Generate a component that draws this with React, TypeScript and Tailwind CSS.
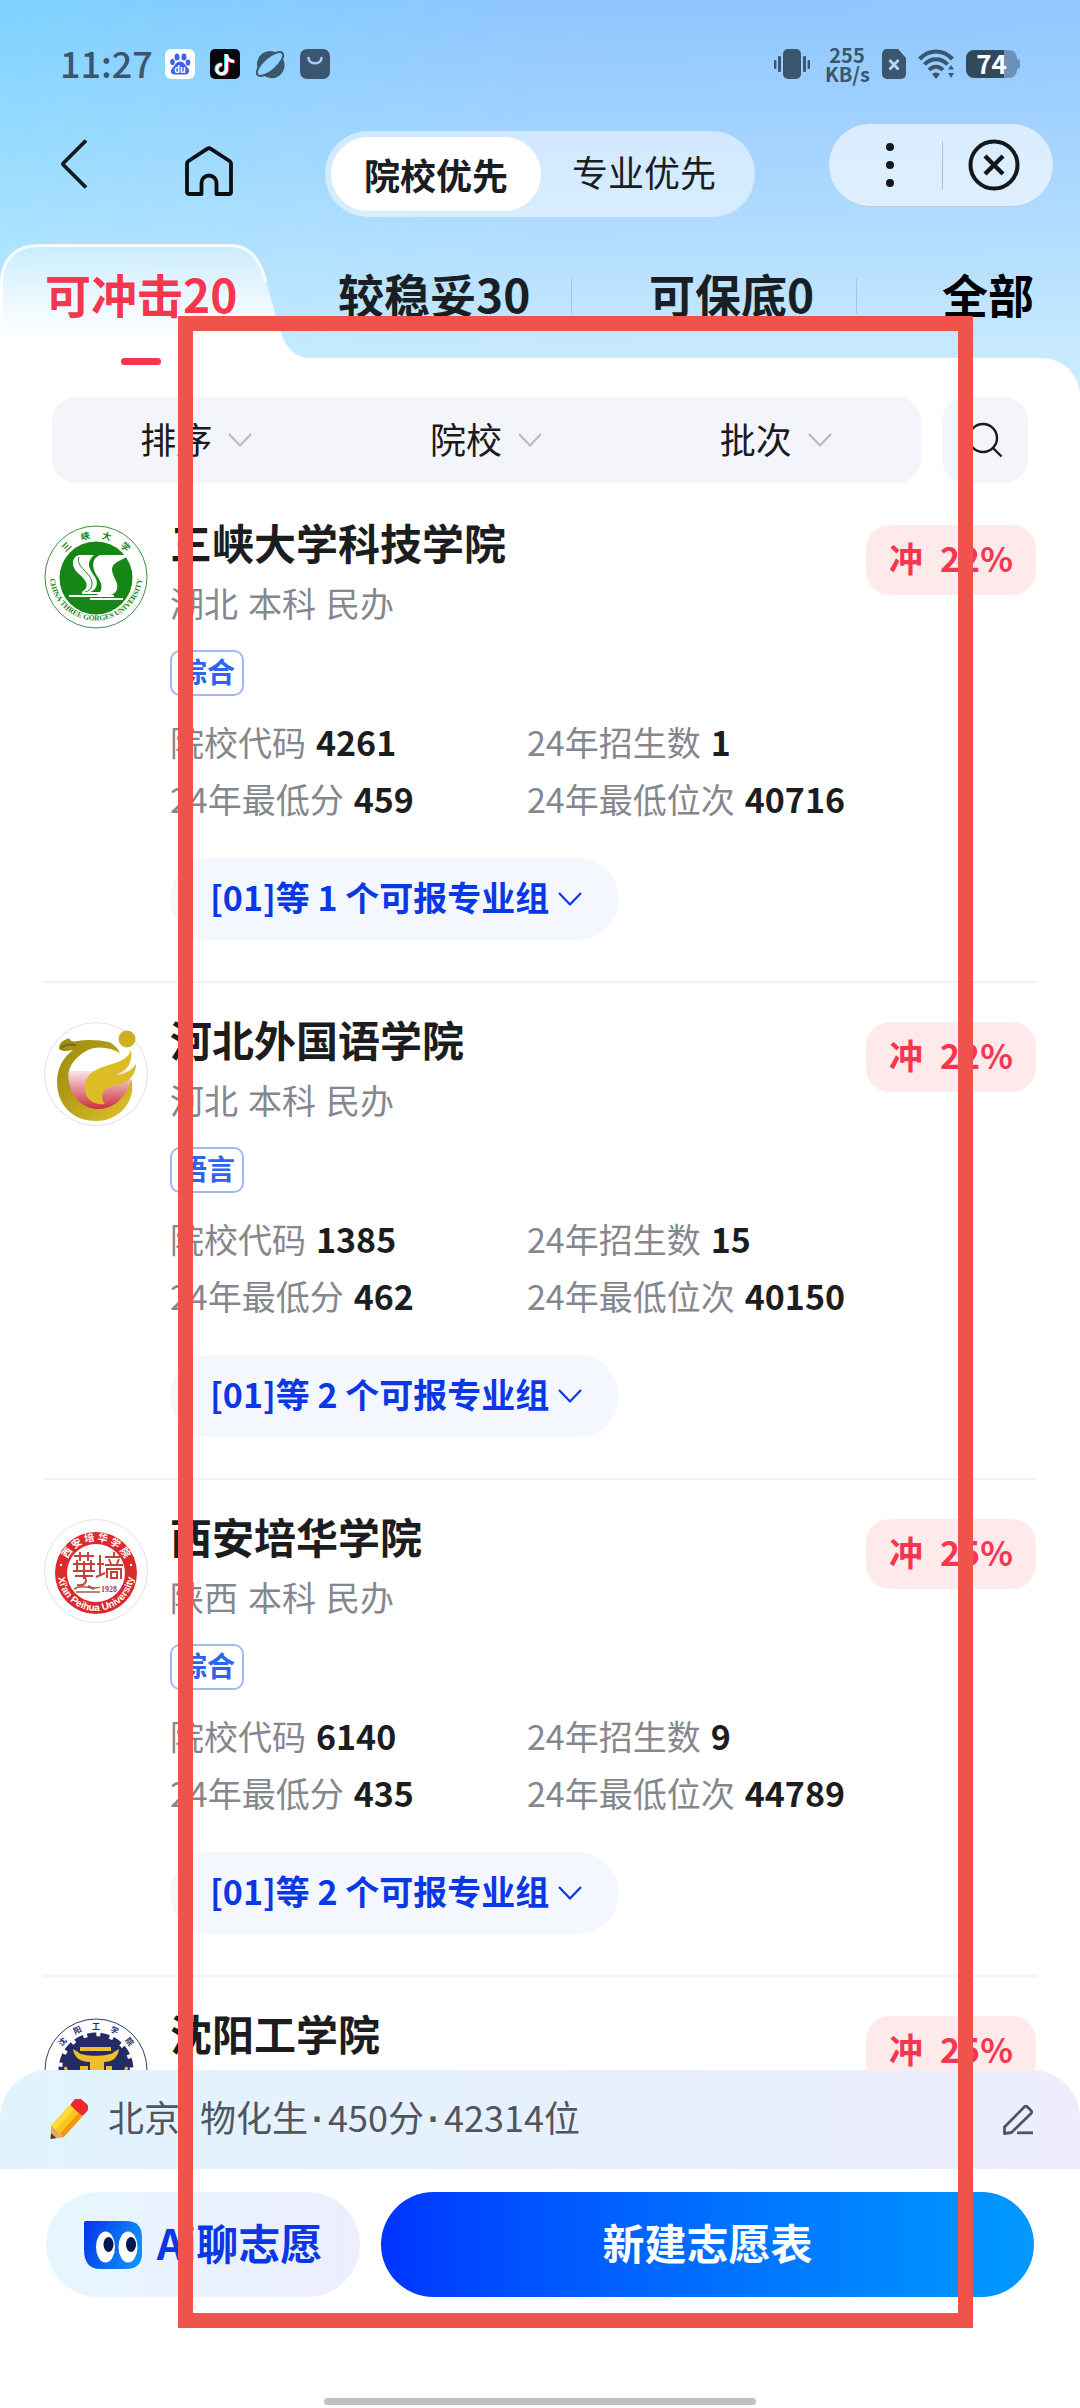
import type { ReactNode } from "react";

type School = {
  name: string;
  traits: string[];
  tag: string;
  rate: string;
  code: string;
  count: string;
  score: string;
  rank: string;
  groups: number;
  logo: ReactNode;
};

function ThreeGorgesLogo() {
  return (
    <svg viewBox="0 0 104 104" className="size-full">
      <defs>
        <path id="tg-bottom" d="M5.500 49 a46.500 46.500 0 0 0 93 0" />
        <path id="tg-top" d="M13 52 a39 39 0 0 1 78 0" />
      </defs>
      <circle cx="52" cy="52" r="51" fill="#fff" stroke="#3f8f45" strokeWidth="1" />
      <circle cx="52" cy="53" r="36.500" fill="#168616" />
      <path
        d="M35 30 H50 C41 38 46 45 51 52 C56 60 50 68 44 67 H38 C46 62 43 56 35 49 C26 41 28 32 35 30Z"
        fill="#fff"
      />
      <path
        d="M56 30 H86 C78 36 69 36 68 44 C68 52 75 57 73 64 C71 71 63 71 53 70 C60 65 58 58 53 51 C47 42 48 33 56 30Z"
        fill="#fff"
      />
      <path d="M35 32 C31 42 48 48 48 58 C48 64 45 66 41 67" fill="none" stroke="#168616" strokeWidth="1" />
      <path d="M25 71 H70 M38 68 H56 M46 74 H79" stroke="#fff" strokeWidth="2" />
      <text fontSize="7.500" fontWeight="700" fill="#168616" className="font-['Liberation_Serif',serif]">
        <textPath href="#tg-bottom" startOffset="50%" textAnchor="middle">
          CHINA THREE GORGES UNIVERSITY
        </textPath>
      </text>
      <text fontSize="9" fontWeight="700" fill="#168616">
        <textPath href="#tg-top" startOffset="50%" textAnchor="middle">
          三　 峡　 大　 学
        </textPath>
      </text>
    </svg>
  );
}

function HebeiLogo() {
  return (
    <svg viewBox="0 0 104 104" className="size-full">
      <defs>
        <linearGradient id="hb-gold" x1="0" y1="0" x2="1" y2="1">
          <stop offset="0" stopColor="#9f8c12" />
          <stop offset="0.400" stopColor="#b09a18" />
          <stop offset="1" stopColor="#e3c52c" />
        </linearGradient>
        <linearGradient id="hb-red" x1="0" y1="0" x2="0" y2="1">
          <stop offset="0" stopColor="#fbe4e6" />
          <stop offset="1" stopColor="#c9202e" />
        </linearGradient>
      </defs>
      <circle cx="52" cy="52" r="51.500" fill="#fff" stroke="#dfe0ee" strokeWidth="1" />
      <path d="M22 49 H86 C88 74 74 90 56 90 C36 90 22 72 22 49Z" fill="url(#hb-red)" />
      <path
        d="M15 27 C15 19 21 18 25 16 C26 19 29 20 33 19 C44 17 56 18 65 20 C69 22 74 26 76 31 C66 25 52 23 42 29 C29 37 22 47 25 60 C28 78 42 88 56 87 C72 86 84 73 87 56 C93 76 78 99 52 99 C28 99 13 82 13 60 C13 45 20 35 29 28 C23 29 19 30 15 27Z"
        fill="url(#hb-gold)"
      />
      <path
        d="M87 27 C89 42 83 49 71 53 C79 53 86 50 92 42 C92 56 80 63 69 64 C59 66 55 74 61 82 C47 84 39 73 41 62 C44 47 60 45 74 40 C81 37 86 33 87 27Z"
        fill="#dcbd26"
      />
      <circle cx="83" cy="17" r="8.500" fill="#cdae20" />
      <path d="M17 26 C21 22 27 22 32 23" fill="none" stroke="#6d6a2a" strokeWidth="2" />
    </svg>
  );
}

function PeihuaLogo() {
  return (
    <svg viewBox="0 0 104 104" className="size-full">
      <defs>
        <path id="ph-bottom" d="M14 54 a38 38 0 0 0 76 0" />
        <path id="ph-top" d="M20 54 a32 32 0 0 1 64 0" />
      </defs>
      <circle cx="52" cy="52" r="51.500" fill="#fff" stroke="#e2e2e6" strokeWidth="1" />
      <circle cx="52" cy="54" r="41" fill="#d92a2c" />
      <circle cx="52" cy="54" r="29" fill="#fff" />
      <text fontSize="10" fontWeight="700" fill="#fff">
        <textPath href="#ph-top" startOffset="50%" textAnchor="middle">
          西 安 培 华 学 院
        </textPath>
      </text>
      <text fontSize="10" fontWeight="700" fill="#fff" className="font-['Liberation_Sans',sans-serif]">
        <textPath href="#ph-bottom" startOffset="50%" textAnchor="middle">
          Xi&apos;an Peihua University
        </textPath>
      </text>
      <circle cx="17" cy="46" r="1.200" fill="#fff" />
      <circle cx="87" cy="46" r="1.200" fill="#fff" />
      <g fill="none" stroke="#c4423c" strokeWidth="2">
        <path d="M30 37 H50 M36 33 V42 M44 33 V42 M29 45 H51 M33 41 V52 M40 42 V60 M47 41 V52 M29 52 H51 M31 57 H49 M33 66 C42 68 44 60 40 58 M44 67 L50 70" />
        <path d="M53 45 H60 M56 36 V57 M52 58 L61 54 M61 38 H79 M70 33 V38 M65 40 L67 45 M75 40 L73 45 M61 46 H79 M63 59 V50 H77 V60 M67 53 H73 V59 H67Z" />
      </g>
      <path d="M30 70 C40 64 50 72 56 68 M32 73 H56" fill="none" stroke="#a85a52" strokeWidth="1.500" />
      <text x="57" y="73" fontSize="8" fontWeight="700" fill="#b8352f" className="font-['Liberation_Serif',serif]">
        1928
      </text>
    </svg>
  );
}

function ShenyangLogo() {
  return (
    <svg viewBox="0 0 104 104" className="size-full">
      <defs>
        <path id="sy-top" d="M11 54 a41 41 0 0 1 82 0" />
      </defs>
      <circle cx="52" cy="54" r="51" fill="#fff" stroke="#323a6e" strokeWidth="1" />
      <circle cx="52" cy="54" r="35" fill="none" stroke="#242c68" strokeWidth="5" strokeDasharray="9 4" />
      <circle cx="52" cy="54" r="34" fill="#242c68" />
      <text fontSize="8" fontWeight="700" fill="#242c68">
        <textPath href="#sy-top" startOffset="50%" textAnchor="middle">
          沈　 阳　 工　 学　 院
        </textPath>
      </text>
      <g fill="#f0bd2b">
        <path d="M36 31 H67 V35 H36Z" />
        <path d="M29 33 L34 36 C37 41 66 41 70 36 L75 33 C74 42 68 46 60 46 V60 H46 V46 C37 46 30 42 29 33Z" />
        <path d="M36 50 H44 V54 H40 V60 H36Z M62 50 H68 V60 H64 V54 H62Z" />
      </g>
      <path d="M21 51 L25 60 M83 51 L79 60" stroke="#f0bd2b" strokeWidth="3" />
    </svg>
  );
}

const schools: School[] = [
  {
    name: "三峡大学科技学院",
    traits: ["湖北", "本科", "民办"],
    tag: "综合",
    rate: "22%",
    code: "4261",
    count: "1",
    score: "459",
    rank: "40716",
    groups: 1,
    logo: <ThreeGorgesLogo />,
  },
  {
    name: "河北外国语学院",
    traits: ["河北", "本科", "民办"],
    tag: "语言",
    rate: "22%",
    code: "1385",
    count: "15",
    score: "462",
    rank: "40150",
    groups: 2,
    logo: <HebeiLogo />,
  },
  {
    name: "西安培华学院",
    traits: ["陕西", "本科", "民办"],
    tag: "综合",
    rate: "25%",
    code: "6140",
    count: "9",
    score: "435",
    rank: "44789",
    groups: 2,
    logo: <PeihuaLogo />,
  },
  {
    name: "沈阳工学院",
    traits: ["辽宁", "本科", "民办"],
    tag: "理工",
    rate: "25%",
    code: "6205",
    count: "6",
    score: "441",
    rank: "43720",
    groups: 2,
    logo: <ShenyangLogo />,
  },
];

const filters = ["排序", "院校", "批次"];

const profile = ["北京", "物化生", "450分", "42314位"];

function ChevronDown({ className }: { className: string }) {
  return (
    <svg viewBox="0 0 26 16" fill="none" stroke="currentColor" className={className}>
      <path d="M2 2 L13 13.500 L24 2" strokeWidth="2.200" strokeLinejoin="round" />
    </svg>
  );
}

function StatusBar() {
  return (
    <div className="flex h-[123px] items-center justify-between pt-[4px] pr-[60px] pl-[60px] text-[#3b566f]">
      <div className="flex items-center gap-[15px]">
        <span className="w-[90px] pb-[3px] text-[36px] leading-[40px] font-medium">11:27</span>
        <svg viewBox="0 0 30 30" className="size-[30px]">
          <rect width="30" height="30" rx="6" fill="#fff" />
          <g fill="#3b63e8">
            <ellipse cx="12" cy="8" rx="2.500" ry="3.500" />
            <ellipse cx="19" cy="8" rx="2.500" ry="3.500" />
            <ellipse cx="7.500" cy="13" rx="2.300" ry="3.100" />
            <ellipse cx="23" cy="13.500" rx="2.300" ry="3.100" />
            <path d="M15 12.500 C19 12.500 20 16 22.500 18.500 C26 22 23 26 20 25.500 H10 C6 26 4.500 22 7.500 19 C10 16.500 11 12.500 15 12.500Z" />
          </g>
          <text x="15" y="24" textAnchor="middle" fontSize="9" fontWeight="700" fill="#fff">
            du
          </text>
        </svg>
        <svg viewBox="0 0 30 30" className="size-[30px]">
          <rect width="30" height="30" rx="5" fill="#06060e" />
          <g fill="none" strokeWidth="3">
            <path d="M15.500 5 V20 A4.800 4.800 0 1 1 11 15 M15.500 6 C16 10 19 12 23 12" stroke="#35e3dd" />
            <path d="M17.500 6 V21 A4.800 4.800 0 1 1 12.500 16 M17.500 7 C18 11 21 13 25 13" stroke="#f3305a" />
            <path d="M16.500 5 V20 A4.800 4.800 0 1 1 12 15.500 M16.500 6 C17 10 20 12 24 12.500" stroke="#fff" />
          </g>
        </svg>
        <svg viewBox="0 0 30 30" fill="none" className="size-[30px]">
          <path d="M3 20 A13 13 0 0 1 22 4 C12 7 7 12 3 20Z M8 26 A13 13 0 0 0 28 10 C23 19 17 23 8 26Z" fill="currentColor" />
          <ellipse cx="15" cy="15" rx="16.500" ry="6.500" transform="rotate(-41 15 15)" stroke="currentColor" strokeWidth="2" />
        </svg>
        <svg viewBox="0 0 30 30" className="size-[30px]">
          <rect width="30" height="30" rx="7" fill="currentColor" />
          <path d="M8.500 9 C9 16 21 16 21.500 9" fill="none" stroke="#a9cdf2" strokeWidth="2.600" strokeLinecap="round" />
        </svg>
      </div>
      <div className="flex items-center">
        <svg viewBox="0 0 36 30" className="mr-[15px] h-[30px] w-[36px]" fill="currentColor">
          <rect x="9" width="18" height="30" rx="5" />
          <rect x="4" y="7" width="3" height="16" rx="1" />
          <rect x="0" y="11" width="2.500" height="9" rx="1" />
          <rect x="29" y="7" width="3" height="16" rx="1" />
          <rect x="33.500" y="11" width="2.500" height="9" rx="1" />
        </svg>
        <div className="mr-[13px] w-[44px] text-center text-[20px] leading-[19px] font-bold">
          <div>255</div>
          <div>KB/s</div>
        </div>
        <svg viewBox="0 0 24 30" className="mr-[12px] h-[30px] w-[24px]">
          <path d="M5 0 H16 L24 9 V25 A5 5 0 0 1 19 30 H5 A5 5 0 0 1 0 25 V5 A5 5 0 0 1 5 0Z" fill="currentColor" />
          <path d="M7.500 11 L16.500 20.500 M16.500 11 L7.500 20.500" stroke="#b4d8fc" strokeWidth="2.800" />
        </svg>
        <svg viewBox="0 0 37 30" className="mr-[11px] h-[30px] w-[37px]" fill="none" stroke="currentColor">
          <path d="M1.500 10 C11 0 25 0 34.500 10" strokeWidth="4" />
          <path d="M6.500 15.500 C13 8.500 23 8.500 29.500 15.500" strokeWidth="4" />
          <path d="M11 21 C15 16.500 21 16.500 25 21" strokeWidth="4" />
          <path d="M14 25 Q18 22 22 25 L18 30Z M30 20.500 L33 16 L36 20.500Z M30 24 L33 29 L36 24Z" fill="currentColor" stroke="none" />
        </svg>
        <div className="flex items-center">
          <div className="flex h-[28px] w-[51px] items-center justify-center rounded-lg bg-linear-to-r from-[#34485c] from-75% to-[#6c92ba] to-75% pb-[2px] text-[26px] leading-[28px] font-bold text-white">
            74
          </div>
          <div className="h-[10px] w-[3px] rounded-r-sm bg-[#6c92ba]" />
        </div>
      </div>
    </div>
  );
}

function NavBar() {
  return (
    <div className="flex h-[121px] items-start pr-[26px] pl-[60px]">
      <button type="button" aria-label="返回" className="mt-[16px]">
        <svg viewBox="0 0 28 50" className="h-[50px] w-[28px]" fill="none" stroke="#14181c" strokeWidth="3.800">
          <path d="M26 1.500 L3.500 24 Q2.500 25 3.500 26 L26 48.500" />
        </svg>
      </button>
      <button type="button" aria-label="首页" className="mt-[23px] ml-[97px]">
        <svg viewBox="0 0 48 50" className="h-[50px] w-[48px]" fill="none" stroke="#0c0f12" strokeWidth="3.800" strokeLinejoin="round">
          <path d="M4 48 Q2 48 2 46 V17.500 Q2 16 3.500 15 L22.500 2.700 Q24 1.800 25.500 2.700 L44.500 15 Q46 16 46 17.500 V46 Q46 48 44 48 H31.500 V37 A7.500 7.500 0 0 0 16.500 37 V48Z" />
        </svg>
      </button>
      <div className="mt-[8px] ml-[92px] flex h-[86px] rounded-full bg-white/50 p-[6px] text-[36px] text-[#1a1d21]">
        <button type="button" className="rounded-full bg-white px-[33px] leading-[74px] font-bold">
          院校优先
        </button>
        <button type="button" className="pr-[33px] pb-[6px] pl-[31px] leading-[68px]">
          专业优先
        </button>
      </div>
      <div className="ml-auto flex h-[84px] w-[226px] items-center rounded-full border border-[#b4cfe6] bg-white/60 pr-[8px]">
        <button type="button" aria-label="更多" className="flex h-full flex-1 flex-col items-center justify-center gap-[10px] pl-[10px]">
          <span className="size-[8px] rounded-full bg-[#14181c]" />
          <span className="size-[8px] rounded-full bg-[#14181c]" />
          <span className="size-[8px] rounded-full bg-[#14181c]" />
        </button>
        <div className="h-[48px] w-px bg-[#adc3d8]" />
        <button type="button" aria-label="关闭" className="flex h-full flex-1 items-center justify-center">
          <svg viewBox="0 0 52 52" className="size-[52px]" fill="none" stroke="#14181c" strokeWidth="4">
            <circle cx="26" cy="26" r="23.500" />
            <path d="M17 17 L35 35 M35 17 L17 35" strokeWidth="4.400" />
          </svg>
        </button>
      </div>
    </div>
  );
}

function RiskTabs() {
  return (
    <div className="relative h-[114px]">
      <svg viewBox="0 0 310 114" className="absolute top-0 left-0 h-[114px] w-[310px]">
        <defs>
          <linearGradient id="tab-fill" x1="0" y1="0" x2="0" y2="1">
            <stop offset="0" stopColor="#fff" stopOpacity="0.350" />
            <stop offset="0.850" stopColor="#fff" />
          </linearGradient>
        </defs>
        <path
          d="M0 114 V38 C1 15 16 1.500 38 1.500 H232 C251 2 261 18 266 38 L279 82 C284 102 294 114 310 114Z"
          fill="url(#tab-fill)"
        />
        <path
          d="M1.500 80 V38 C2 15 16 1.500 38 1.500 H232 C251 2 261 18 266 38"
          fill="none"
          stroke="#fff"
          strokeOpacity="0.850"
          strokeWidth="3"
        />
      </svg>
      <div className="relative grid grid-cols-[293fr_233fr_78fr_207fr_86fr_92fr] justify-items-start pt-[22px] pr-[46px] pl-[45px] text-[46px] leading-[54px] font-bold whitespace-nowrap text-[#1a1f25]">
        <button type="button" className="relative text-[#f5364f]">
          可冲击20
          <span className="absolute top-[92px] left-1/2 h-[7px] w-[40px] -translate-x-1/2 rounded-full bg-[#f5364f]" />
        </button>
        <button type="button">较稳妥30</button>
        <div className="mt-[12px] h-[36px] w-px bg-[#a5c8e8]" />
        <button type="button">可保底0</button>
        <div className="mt-[12px] h-[36px] w-px bg-[#a5c8e8]" />
        <button type="button" className="text-black">
          全部
        </button>
      </div>
    </div>
  );
}

function FilterBar() {
  return (
    <div className="flex gap-[21px] pt-[39px] pr-[52px] pl-[52px]">
      <div className="flex h-[86px] flex-1 rounded-3xl bg-[#f4f5fa] text-[36px] text-[#191b20]">
        {filters.map((filter) => (
          <button key={filter} type="button" className="flex flex-1 items-center justify-center gap-[15px]">
            <span className="pb-[5px]">{filter}</span>
            <ChevronDown className="h-[16px] w-[26px] text-[#b9bbc2]" />
          </button>
        ))}
      </div>
      <button type="button" aria-label="搜索" className="flex size-[86px] items-center justify-center rounded-3xl bg-[#f4f5fa]">
        <svg viewBox="0 0 36 36" className="size-[36px]" fill="none" stroke="#191b20" strokeWidth="2.400">
          <circle cx="16" cy="16" r="14" />
          <path d="M26 26 L34.500 34.500" />
        </svg>
      </button>
    </div>
  );
}

function Stat({ label, value }: { label: string; value: string }) {
  return (
    <div className="flex gap-[10px]">
      <dt className="text-[#85878e]">{label}</dt>
      <dd className="font-bold text-[#1c1d20]">{value}</dd>
    </div>
  );
}

function SchoolCard({ school }: { school: School }) {
  return (
    <article className="mx-[44px] flex items-start gap-[22px] border-b-2 border-[#f2f2f4] pt-[35px] pb-[41px]">
      <div className="mt-[4px] size-[104px] shrink-0">{school.logo}</div>
      <div className="min-w-0 flex-1">
        <h2 className="text-[42px] leading-[42px] font-bold text-[#1c1d20]">{school.name}</h2>
        <p className="mt-[20px] flex gap-[10px] text-[34px] leading-[40px] text-[#85878e]">
          {school.traits.map((trait) => (
            <span key={trait}>{trait}</span>
          ))}
        </p>
        <span className="mt-[27px] block h-[46px] w-fit rounded-[10px] border-2 border-[#a3b8f0] px-[7px] text-[28px] leading-[38px] font-bold text-[#2c63f0]">
          {school.tag}
        </span>
        <dl className="mt-[17px] grid grid-cols-[357px_1fr] text-[34px] leading-[57px] whitespace-nowrap">
          <Stat label="院校代码" value={school.code} />
          <Stat label="24年招生数" value={school.count} />
          <Stat label="24年最低分" value={school.score} />
          <Stat label="24年最低位次" value={school.rank} />
        </dl>
        <button
          type="button"
          className="mt-[31px] flex h-[82px] items-center gap-[8px] rounded-full bg-[#f4f7fe] pr-[36px] pl-[40px] text-[34px] font-bold text-[#0a38e6]"
        >
          <span className="pb-[5px]">
            [01]等 {school.groups} 个可报专业组
          </span>
          <ChevronDown className="h-[16px] w-[26px]" />
        </button>
      </div>
      <div className="mt-[4px] flex h-[70px] w-[170px] shrink-0 items-center justify-center gap-[17px] rounded-3xl bg-[#ffeaeb] pb-[5px] text-[34px] font-bold text-[#f5364f]">
        <span>冲</span>
        <span>{school.rate}</span>
      </div>
    </article>
  );
}

function BottomPanel() {
  return (
    <footer className="bg-white">
      <div className="flex h-[99px] items-center rounded-t-[48px] bg-linear-to-r from-[#e1f4fe] to-[#ededfd] pr-[46px] pl-[46px] text-[#50555f]">
        <svg viewBox="0 0 42 42" className="mr-[20px] size-[42px]">
          <g transform="rotate(42 21 21)">
            <rect x="13" y="-4" width="17" height="14" rx="5" fill="#ea2a2c" />
            <rect x="13" y="8" width="17" height="28" fill="#fbc51c" />
            <rect x="13" y="8" width="6" height="28" fill="#ffdc3c" />
            <rect x="25" y="8" width="5" height="28" fill="#f3970f" />
            <path d="M13 36 H30 L21.500 46Z" fill="#e9a860" />
            <path d="M18 41.500 H25 L21.500 46Z" fill="#55302a" />
          </g>
        </svg>
        <p className="pb-[3px] text-[36px] leading-[44px]">
          {profile.map((item, index) => (
            <span key={item}>
              {index > 0 && <span className="mx-[4px] font-['Liberation_Sans',sans-serif] font-bold">·</span>}
              {item}
            </span>
          ))}
        </p>
        <button type="button" aria-label="编辑" className="ml-auto">
          <svg viewBox="0 0 32 32" className="size-[32px]" fill="none" stroke="currentColor" strokeWidth="2.800" strokeLinejoin="round">
            <path d="M2.500 29.500 V23 L22.500 2.800 Q24 1.500 25.500 3 L29 6.500 Q30.500 8 29 9.500 L9.500 28.500Z" />
            <path d="M15 28.800 H31" />
          </svg>
        </button>
      </div>
      <div className="flex gap-[21px] px-[46px] pt-[23px] text-[42px] font-bold">
        <button
          type="button"
          className="flex h-[105px] w-[314px] shrink-0 items-center justify-center gap-[15px] rounded-full bg-linear-to-r from-[#e6f6fe] to-[#eeeefd] whitespace-nowrap text-[#0a38e6]"
        >
          <svg viewBox="0 0 58 48" className="h-[48px] w-[58px]">
            <defs>
              <linearGradient id="ai-blue" x1="0" y1="0" x2="1" y2="0.300">
                <stop offset="0" stopColor="#0533ea" />
                <stop offset="1" stopColor="#108cf8" />
              </linearGradient>
            </defs>
            <path d="M2 0 H42 Q58 0 58 16 V32 Q58 48 42 48 H16 Q0 48 0 28 V2 Q0 0 2 0Z" fill="url(#ai-blue)" />
            <ellipse cx="21.500" cy="26" rx="9.500" ry="15.500" fill="#fff" />
            <ellipse cx="44" cy="26" rx="9.500" ry="15.500" fill="#fff" />
            <ellipse cx="24.500" cy="23.500" rx="5" ry="7.500" fill="#061650" />
            <ellipse cx="47" cy="23.500" rx="5" ry="7.500" fill="#061650" />
          </svg>
          <span className="pb-[6px]">Ai聊志愿</span>
        </button>
        <button type="button" className="h-[105px] flex-1 rounded-full bg-linear-to-r from-[#0033ff] to-[#0799ff] pb-[6px] text-white">
          新建志愿表
        </button>
      </div>
      <div className="mx-auto mt-[101px] mb-[3px] h-[7px] w-2/5 rounded-full bg-[#c1c1c1]" />
    </footer>
  );
}

export default function App() {
  return (
    <div className="relative flex h-screen flex-col overflow-hidden bg-white font-['Noto_Sans_CJK_SC',sans-serif]">
      <div className="bg-[linear-gradient(to_bottom,rgba(214,243,254,0),rgba(214,243,254,0.35)_35%,rgba(214,243,254,1)_92%),linear-gradient(to_right,#7dd2ff,#8fc6ff_50%,#8fc7ff)]">
        <header>
          <StatusBar />
          <NavBar />
          <RiskTabs />
        </header>
        <div className="rounded-tr-[38px] bg-white">
          <FilterBar />
        </div>
      </div>
      <main className="min-h-0 flex-1 overflow-y-auto pt-[3px] [scrollbar-width:none]">
        {schools.map((school) => (
          <SchoolCard key={school.name} school={school} />
        ))}
      </main>
      <BottomPanel />
      <div className="pointer-events-none absolute top-[316px] right-[107px] bottom-[80px] left-[178px] border-[15px] border-[#f0524c]" />
    </div>
  );
}
